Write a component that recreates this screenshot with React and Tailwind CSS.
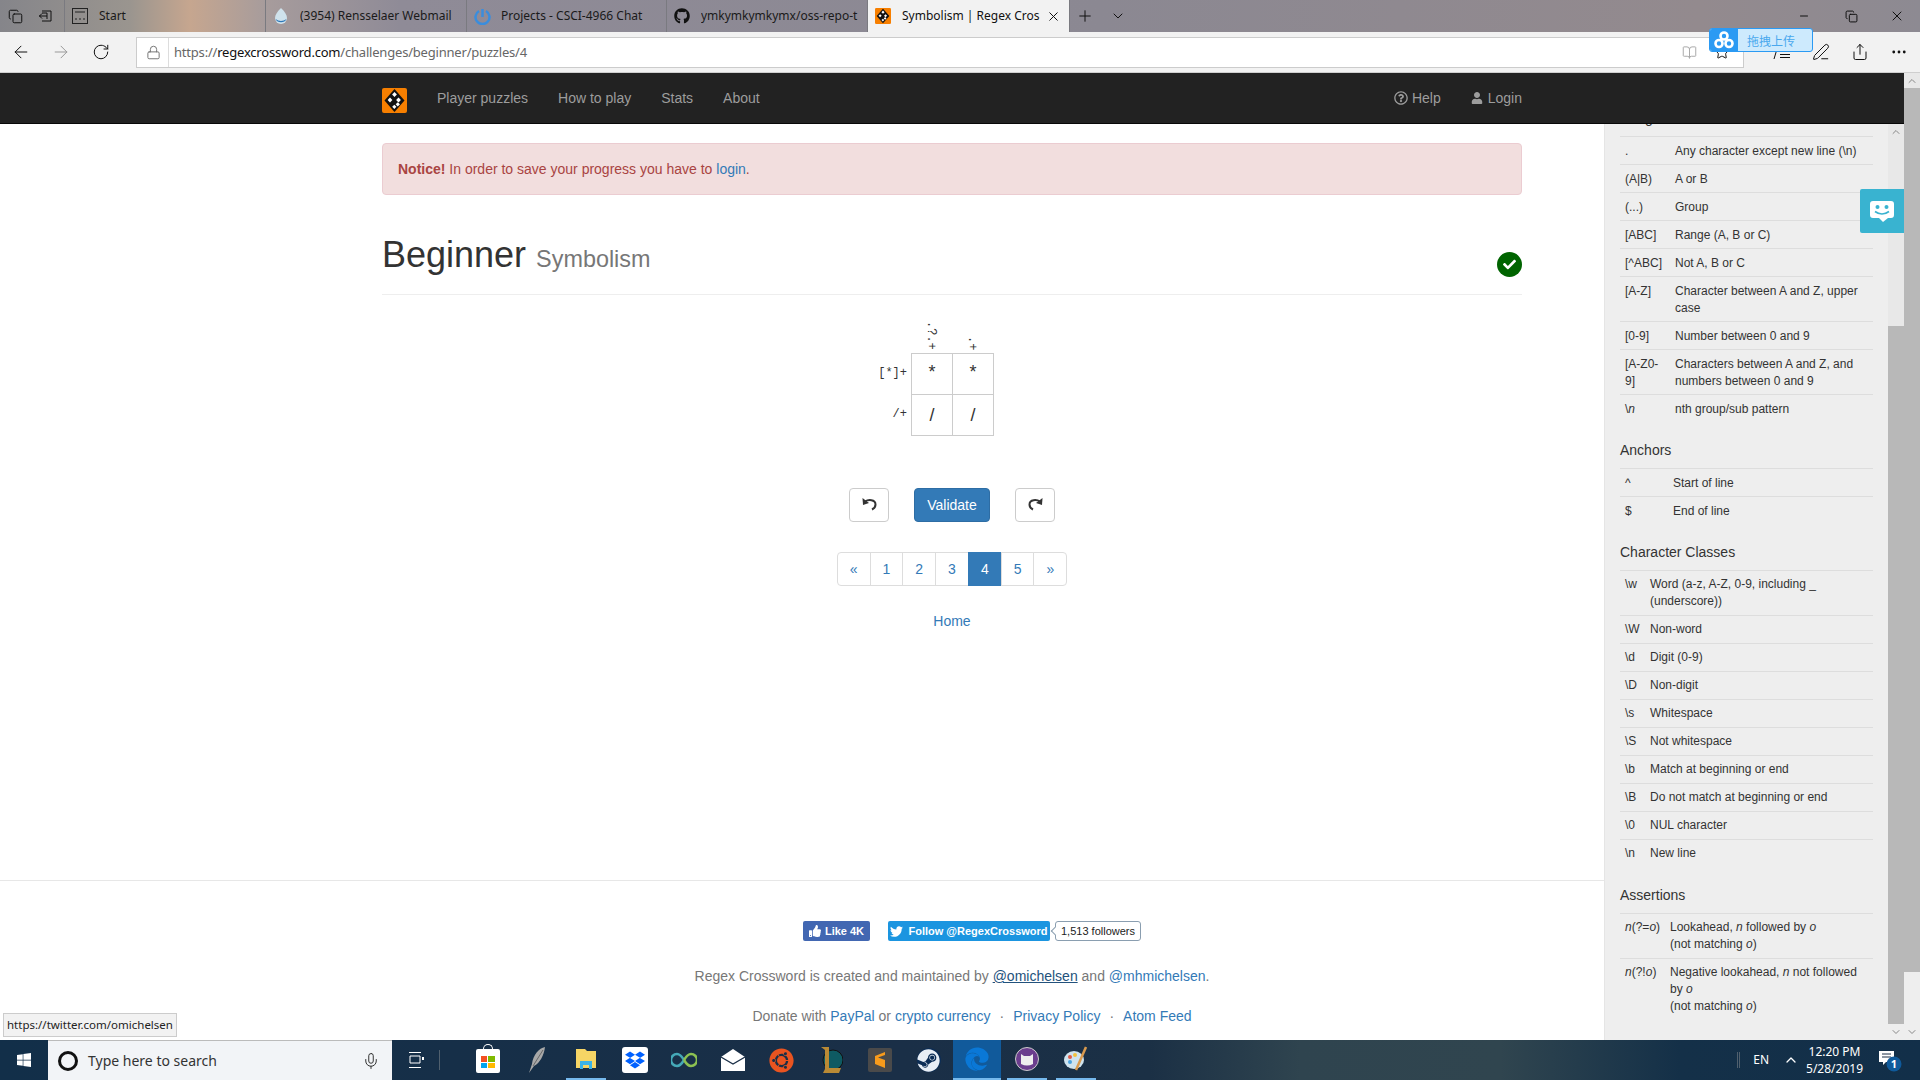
import { FaGithub, FaThumbsUp, FaTwitter, FaWindows, FaUbuntu, FaSteam, FaEdge, FaDropbox, FaCheck, FaUser, FaRegQuestionCircle } from 'react-icons/fa'
import { ArrowLeft, ArrowRight, RotateCw, Lock, BookOpen, Star, PenLine, Share, MoreHorizontal, Plus, ChevronDown, ChevronUp, X, Minus, Mic, Copy } from 'lucide-react'

const usage = [
  ['.', 'Any character except new line (\\n)'],
  ['(A|B)', 'A or B'],
  ['(...)', 'Group'],
  ['[ABC]', 'Range (A, B or C)'],
  ['[^ABC]', 'Not A, B or C'],
  ['[A-Z]', 'Character between A and Z, upper case'],
  ['[0-9]', 'Number between 0 and 9'],
  ['[A-Z0-9]', 'Characters between A and Z, and numbers between 0 and 9'],
  [<>\<i>n</i></>, 'nth group/sub pattern'],
]
const anchors = [['^', 'Start of line'], ['$', 'End of line']]
const classes = [
  ['\\w', 'Word (a-z, A-Z, 0-9, including _ (underscore))'],
  ['\\W', 'Non-word'],
  ['\\d', 'Digit (0-9)'],
  ['\\D', 'Non-digit'],
  ['\\s', 'Whitespace'],
  ['\\S', 'Not whitespace'],
  ['\\b', 'Match at beginning or end'],
  ['\\B', 'Do not match at beginning or end'],
  ['\\0', 'NUL character'],
  ['\\n', 'New line'],
]
const assertions = [
  [<><i>n</i>(?=<i>o</i>)</>, <>Lookahead, <i>n</i> followed by <i>o</i><br />(not matching <i>o</i>)</>],
  [<><i>n</i>(?!<i>o</i>)</>, <>Negative lookahead, <i>n</i> not followed by <i>o</i><br />(not matching <i>o</i>)</>],
]

function Logo({ size = 25 }) {
  return (
    <svg width={size} height={size} viewBox="0 0 25 25">
      <rect width="25" height="25" rx="2" fill="#f77f00" />
      <path d="M12.5 1 L22.5 12.5 L12.5 24 L2.5 12.5 Z" fill="#111" />
      <rect x="10.8" y="4.8" width="3.4" height="3.4" fill="#fff" transform="rotate(45 12.5 6.5)" />
      <rect x="6.3" y="10.3" width="3.4" height="3.4" fill="#fff" transform="rotate(45 8 12)" />
      <rect x="14.8" y="10.3" width="3.4" height="3.4" fill="#fff" transform="rotate(45 16.5 12)" />
      <rect x="14.3" y="14.8" width="3" height="3" fill="#fff" transform="rotate(45 15.8 16.3)" />
      <rect x="10.8" y="17.3" width="3" height="3" fill="#fff" transform="rotate(45 12.3 18.8)" />
    </svg>
  )
}

function Tab({ icon, title, active, width }) {
  return (
    <div className={`flex items-center h-full pl-[6px] overflow-hidden shrink-0 border-r border-[#7a7a80] ${active ? 'bg-[#f2f2f2] text-[#111]' : 'text-[#1a1a1a]'} ${width}`}>
      <span className="w-[18px] h-[18px] flex items-center justify-center shrink-0">{icon}</span>
      <span className="ml-[10px] whitespace-nowrap overflow-hidden flex-1">{title}</span>
      {active && <X size={15} absoluteStrokeWidth strokeWidth={1} className="ml-[4px] mr-[8px] shrink-0" />}
    </div>
  )
}

function TabBar() {
  return (
    <div className="h-[32px] flex items-center text-[12px] font-['Noto_Sans',sans-serif] bg-[linear-gradient(90deg,#85858a_0px,#9a958f_130px,#c6a68f_190px,#a79c9c_265px,#8f8b97_400px,#8b8892_1100px,#938a8e_1700px,#8d8a92_1920px)]">
      <div className="w-[65px] h-full flex items-center gap-[15px] pl-[8px] border-r border-[#7a7a80] shrink-0">
        <Copy size={15} absoluteStrokeWidth strokeWidth={1} className="text-[#111]" />
        <svg width="16" height="16" viewBox="0 0 16 16" fill="none" stroke="#111"><path d="M4 3h9v10H4M1 8h8M4 5.5 1.5 8 4 10.5M4 5h5v6" /></svg>
      </div>
      <Tab width="w-[201px]" title="Start" icon={<svg width="16" height="16" viewBox="0 0 16 16" fill="none" stroke="#222"><rect x="0.5" y="0.5" width="15" height="15" /><path d="M3 4h10M3 11h2M7 11h2M11 11h2" /></svg>} />
      <Tab width="w-[201px]" title="(3954) Rensselaer Webmail" icon={<svg width="16" height="18" viewBox="0 0 16 18"><path d="M8 1 C12 5 14 8 14 11 A6 6 0 0 1 2 11 C2 8 4 5 8 1Z" fill="#cfe2ec" /><path d="M2.5 12 A6 5.5 0 0 0 13.5 12 C10 14.5 6 14.5 2.5 12Z" fill="#2f78b8" /></svg>} />
      <Tab width="w-[200px]" title="Projects - CSCI-4966 Chat" icon={<svg width="17" height="17" viewBox="0 0 17 17" fill="none"><path d="M5 3 A7 7 0 1 0 12 3" stroke="#3a8ddd" strokeWidth="2.5" /><path d="M8.5 1v8" stroke="#3a8ddd" strokeWidth="2.5" /></svg>} />
      <Tab width="w-[201px]" title="ymkymkymkymx/oss-repo-t" icon={<FaGithub size={16} color="#111" />} />
      <Tab active width="w-[202px]" title="Symbolism | Regex Cros" icon={<Logo size={16} />} />
      <Plus size={18} absoluteStrokeWidth strokeWidth={1} className="ml-[6px] text-[#111]" />
      <ChevronDown size={16} absoluteStrokeWidth strokeWidth={1} className="ml-[16px] text-[#111]" />
      <div className="ml-auto flex items-center text-[#111]">
        <Minus size={12} absoluteStrokeWidth strokeWidth={1} />
        <Copy size={13} absoluteStrokeWidth strokeWidth={1} className="ml-[35px]" />
        <X size={16} absoluteStrokeWidth strokeWidth={1} className="ml-[31px] mr-[15px]" />
      </div>
    </div>
  )
}

function HubIcon() {
  return (
    <svg width="18" height="18" viewBox="0 0 18 18" fill="none" stroke="#111">
      <path d="M7 8.5h10M7 11.5h10M7 14.5h10M1 16 4 6" />
    </svg>
  )
}

function AddressBar() {
  return (
    <div className="relative h-[41px] bg-[#f2f2f2] border-b border-[#cfcfcf] flex items-center font-['Noto_Sans',sans-serif] text-[#111]">
      <ArrowLeft size={20} absoluteStrokeWidth strokeWidth={1} className="ml-[11px]" />
      <ArrowRight size={20} absoluteStrokeWidth strokeWidth={1} className="ml-[20px] text-[#999]" />
      <RotateCw size={18} absoluteStrokeWidth strokeWidth={1} className="ml-[21px]" />
      <div className="ml-[26px] w-[1608px] h-[31px] bg-white border border-[#ccc] flex items-center">
        <Lock size={15} absoluteStrokeWidth strokeWidth={1} className="ml-[9px] text-[#777]" />
        <span className="ml-[7px] h-[29px] border-l border-[#ddd]" />
        <span className="ml-[5px] pt-[2px] text-[13px] text-[#666] tracking-[-0.2px]">https://<span className="text-[#111]">regexcrossword.com</span>/challenges/beginner/puzzles/4</span>
        <BookOpen size={15} absoluteStrokeWidth strokeWidth={1} className="ml-auto mr-[17px] text-[#aaa]" />
        <Star size={16} absoluteStrokeWidth strokeWidth={1} className="mr-[13px] text-[#111]" />
      </div>
      <div className="ml-[29px] flex items-center gap-[21px]">
        <HubIcon />
        <PenLine size={18} absoluteStrokeWidth strokeWidth={1} />
        <Share size={18} absoluteStrokeWidth strokeWidth={1} />
        <MoreHorizontal size={18} absoluteStrokeWidth strokeWidth={1.3} />
      </div>
      <div className="absolute left-[1709px] top-[-4px] w-[104px] h-[24px] rounded-[3px] border border-[#2b9af3] bg-[#cdeafd] flex items-center overflow-hidden">
        <span className="w-[28px] h-full bg-[#2b9af3] flex items-center justify-center">
          <svg width="20" height="18" viewBox="0 0 20 18" fill="none" stroke="#fff" strokeWidth="2.6"><circle cx="10" cy="5" r="3.5" /><circle cx="5" cy="12.5" r="3.5" /><circle cx="15" cy="12.5" r="3.5" /></svg>
        </span>
        <span className="ml-[9px] pt-[1px] text-[12px] text-[#49a8ee] font-['Noto_Sans_CJK_SC',sans-serif]">拖拽上传</span>
      </div>
    </div>
  )
}

function Nav() {
  return (
    <div className="h-[51px] bg-[#222] border-b border-[#080808] flex items-center pl-[382px] pr-[382px] text-[14px] text-[#9d9d9d] shrink-0">
      <span className="mt-[4px] flex"><Logo /></span>
      <span className="ml-[30px]">Player puzzles</span>
      <span className="ml-[30px]">How to play</span>
      <span className="ml-[30px]">Stats</span>
      <span className="ml-[30px]">About</span>
      <span className="ml-auto flex items-center gap-[4px]"><FaRegQuestionCircle size={14} />Help</span>
      <span className="ml-[30px] flex items-center gap-[5px]"><FaUser size={12} />Login</span>
    </div>
  )
}

function Puzzle() {
  return (
    <div className="mt-[23px] ml-[495px] flex items-start">
      <div className="mt-[35px] w-[30px] text-right font-['Liberation_Mono',monospace] text-[12px] text-[#333]">
        <div className="h-[41px] leading-[41px]">[*]+</div>
        <div className="h-[41px] leading-[41px]">/+</div>
      </div>
      <div className="ml-[4px]">
        <div className="h-[35px] flex font-['Liberation_Mono',monospace] text-[12px] text-[#333]">
          <div className="w-[41px] flex justify-center items-end pb-[3px] pr-[2px]"><span className="[writing-mode:vertical-lr] leading-none">.?.+</span></div>
          <div className="w-[41px] flex justify-center items-end pb-[3px] pr-[2px]"><span className="[writing-mode:vertical-lr] leading-none">.+</span></div>
        </div>
        <div className="grid grid-cols-[41px_41px] grid-rows-[41px_41px] border-t border-l border-[#ccc] w-[83px] text-[18px] text-[#333]">
          <div className="border-r border-b border-[#ccc] flex items-center justify-center pb-[3px]">*</div>
          <div className="border-r border-b border-[#ccc] flex items-center justify-center pb-[3px]">*</div>
          <div className="border-r border-b border-[#ccc] flex items-center justify-center">/</div>
          <div className="border-r border-b border-[#ccc] flex items-center justify-center">/</div>
        </div>
      </div>
    </div>
  )
}

function TurnIcon({ flip }) {
  return (
    <svg width="15" height="14" viewBox="0 0 15 14" className={flip ? '-scale-x-100' : ''} fill="none">
      <path d="M3 4.5 C6 2.5 13.5 2 13.5 7.5 C13.5 10 12 11.5 10 12.5" stroke="#333" strokeWidth="2" />
      <path d="M0.5 1 L1 8 L7 6 Z" fill="#333" />
    </svg>
  )
}

function Controls() {
  return (
    <div className="mt-[52px] flex justify-center gap-[25px] items-center text-[14px]">
      <button className="w-[40px] h-[34px] bg-white border border-[#ccc] rounded-[4px] flex items-center justify-center pb-[3px]"><TurnIcon /></button>
      <button className="w-[76px] h-[34px] bg-[#337ab7] border border-[#2e6da4] text-white rounded-[4px]">Validate</button>
      <button className="w-[40px] h-[34px] bg-white border border-[#ccc] rounded-[4px] flex items-center justify-center pb-[3px]"><TurnIcon flip /></button>
    </div>
  )
}

function Pagination() {
  const items = ['«', '1', '2', '3', '4', '5', '»']
  return (
    <div className="mt-[30px] flex justify-center">
      <div className="flex text-[14px] text-[#337ab7] h-[34px]">
        {items.map(p => (
          <span
            key={p}
            className={`px-[12px] -ml-px first:ml-0 border flex items-center first:rounded-l-[4px] last:rounded-r-[4px] ${p === '4' ? 'bg-[#337ab7] border-[#337ab7] text-white' : 'bg-white border-[#ddd]'}`}
          >
            {p}
          </span>
        ))}
      </div>
    </div>
  )
}

function Footer() {
  return (
    <div className="mt-auto border-t border-[#e7e7e7] h-[160px] shrink-0 w-full">
      <div className="ml-[382px] w-[1140px] text-[14px] text-[#777]">
        <div className="mt-[40px] pl-[40px] h-[20px] flex justify-center items-center text-[11px] font-bold">
          <span className="w-[67px] h-[20px] bg-[#4267b2] text-white rounded-[2px] flex items-center justify-center gap-[4px]"><FaThumbsUp size={12} />Like 4K</span>
          <span className="ml-[18px] w-[162px] h-[20px] bg-[#1b95e0] text-white rounded-[2px] flex items-center justify-center gap-[5px]"><FaTwitter size={13} />Follow @RegexCrossword</span>
          <span className="relative ml-[5px] w-[86px] h-[20px] bg-white border border-[#8a9eb0] text-[#222] rounded-[3px] flex items-center justify-center font-normal text-[11px]">
            <span className="absolute left-[-4px] top-[6px] w-[6px] h-[6px] rotate-45 bg-white border-l border-b border-[#8a9eb0]" />
            1,513 followers
          </span>
        </div>
        <p className="mt-[25px] text-center h-[20px] leading-[20px]">
          Regex Crossword is created and maintained by <span className="text-[#23527c] underline">@omichelsen</span> and <span className="text-[#337ab7]">@mhmichelsen</span>.
        </p>
        <p className="mt-[20px] pl-[40px] text-center h-[20px] leading-[20px]">
          Donate with <span className="text-[#337ab7]">PayPal</span> or <span className="text-[#337ab7]">crypto currency</span>
          <span className="mx-[9px]">·</span><span className="text-[#337ab7]">Privacy Policy</span>
          <span className="mx-[9px]">·</span><span className="text-[#337ab7]">Atom Feed</span>
        </p>
      </div>
    </div>
  )
}

function RefTable({ rows, colClass, rowClass = 'pt-[5px] pb-[5px]' }) {
  return (
    <div>
      {rows.map((r, i) => (
        <div key={i} className={`flex border-t border-[#ddd] leading-[17px] ${rowClass}`}>
          <div className={`shrink-0 pl-[5px] ${colClass}`}>{r[0]}</div>
          <div className="pr-[5px] flex-1">{r[1]}</div>
        </div>
      ))}
    </div>
  )
}

function Heading({ children }) {
  return <h4 className="text-[14px] leading-[20px] mt-[18px] mb-[8px]">{children}</h4>
}

function Sidebar() {
  return (
    <aside className="w-[284px] shrink-0 bg-[#eee] border-l border-[#e5e5e5] text-[12px] text-[#333] px-[15px] overflow-hidden">
      <h4 className="text-[14px] leading-[20px] -mt-[16px] mb-[8px]">Usage</h4>
      <RefTable rows={usage} colClass="w-[55px] pr-[10px]" rowClass="pt-[6px] pb-[4px]" />
      <Heading>Anchors</Heading>
      <RefTable rows={anchors} colClass="w-[53px]" rowClass="pt-[6px] pb-[4px]" />
      <Heading>Character Classes</Heading>
      <RefTable rows={classes} colClass="w-[30px]" />
      <Heading>Assertions</Heading>
      <RefTable rows={assertions} colClass="w-[50px]" />
    </aside>
  )
}

function TaskSlot({ children, on }) {
  return (
    <div className="w-[49px] h-full flex justify-center shrink-0">
      <div className={`w-[40px] h-full flex items-center justify-center ${on ? 'border-b-2 border-[#76b9ed]' : ''}`}>{children}</div>
    </div>
  )
}

function Taskbar() {
  return (
    <div className="relative h-[40px] shrink-0 flex items-center text-white font-['Noto_Sans',sans-serif] bg-[linear-gradient(90deg,#122f49_0px,#1a2f47_900px,#1b3045_1150px,#2f444f_1300px,#30454f_1500px,#143048_1680px,#122f49_1920px)]">
      <div className="w-[48px] flex justify-center"><FaWindows size={16} /></div>
      <div className="w-[344px] h-full bg-[#f2f4f7] border-t border-[#bbb] flex items-center text-[#333] text-[14px]">
        <span className="ml-[10px] w-[20px] h-[20px] rounded-full border-[3px] border-[#111]" />
        <span className="ml-[10px]">Type here to search</span>
        <Mic size={18} absoluteStrokeWidth strokeWidth={1} className="ml-auto mr-[12px]" />
      </div>
      <svg width="16" height="16" viewBox="0 0 16 16" className="ml-[16px]" fill="none" stroke="#fff"><path d="M1 .5h12M1 15.5h12M2 4h10v7H2z" /><path d="M15 5v3" strokeWidth="2" /></svg>
      <span className="ml-[15px] h-[20px] border-l border-[#50606e] shrink-0" />
      <div className="ml-[23px] flex h-full">
        <TaskSlot>
          <div className="relative w-[24px] h-[24px] mt-[2px] bg-white rounded-[2px] grid grid-cols-2 gap-px p-[5px] pt-[7px]">
            <span className="absolute left-[7px] top-[-5px] w-[10px] h-[8px] rounded-t-[5px] border border-white border-b-0" />
            <span className="bg-[#f25022]" /><span className="bg-[#7fba00]" /><span className="bg-[#00a4ef]" /><span className="bg-[#ffb900]" />
          </div>
        </TaskSlot>
        <TaskSlot>
          <svg width="20" height="28" viewBox="0 0 20 28"><path d="M18 1 C12 2 6 9 5 18 L2 27 L7 20 C13 17 17 9 18 1Z" fill="#a8a8a8" /><path d="M16 4 6 20" stroke="#555" strokeWidth="0.8" /></svg>
        </TaskSlot>
        <TaskSlot on>
          <svg width="22" height="22" viewBox="0 0 22 22"><path d="M1 1h9l2 2h9v17H1z" fill="#f6d565" /><path d="M5 21v-8h12v8h-3v-4H8v4z" fill="#3ab3e8" /></svg>
        </TaskSlot>
        <TaskSlot>
          <div className="w-[26px] h-[26px] bg-white rounded-[3px] flex items-center justify-center"><FaDropbox size={20} color="#0061ff" /></div>
        </TaskSlot>
        <TaskSlot>
          <svg width="26" height="16" viewBox="0 0 26 16" fill="none" strokeWidth="2.5"><path d="M13 8 C10 3 8 2 6 2 A6 6 0 0 0 6 14 C8 14 10 13 13 8" stroke="#45a9b8" /><path d="M13 8 C16 3 18 2 20 2 A6 6 0 0 1 20 14 C18 14 16 13 13 8" stroke="#8cc152" /></svg>
        </TaskSlot>
        <TaskSlot>
          <svg width="24" height="24" viewBox="0 0 24 24"><path d="M0 9 12 1l12 8v14H0z" fill="#fff" /><path d="M0 9 12 16l12-7" fill="none" stroke="#1a2f47" strokeWidth="1.2" /></svg>
        </TaskSlot>
        <TaskSlot><FaUbuntu size={25} color="#e95420" /></TaskSlot>
        <TaskSlot>
          <svg width="24" height="28" viewBox="0 0 24 28"><circle cx="14" cy="14" r="10" fill="#0e5a62" stroke="#111" /><path d="M2 1h8v21h12l-2 5H4l2-4V4z" fill="#b98a35" /></svg>
        </TaskSlot>
        <TaskSlot>
          <div className="w-[24px] h-[24px] bg-[#4a4a4a] rounded-[2px] flex items-center justify-center">
            <svg width="12" height="18" viewBox="0 0 12 18" fill="#f89b1c"><path d="M11 1 1 5v4l10 4v-4L4 6.5 11 4zM1 13l10 4v-4L1 9z" /></svg>
          </div>
        </TaskSlot>
        <TaskSlot>
          <div className="w-[24px] h-[24px] rounded-full bg-[#0c2d55] flex items-center justify-center"><FaSteam size={23} color="#e8eef5" /></div>
        </TaskSlot>
        <div className="w-[48px] h-full bg-[#115a9b] flex items-center justify-center border-b-2 border-[#76b9ed] shrink-0 mr-[1px]"><FaEdge size={24} color="#0a78d7" /></div>
        <TaskSlot on>
          <svg width="24" height="24" viewBox="0 0 24 24"><circle cx="12" cy="12" r="11.5" fill="#6b3e8e" stroke="#ccc" /><path d="M6 7l3 2h6l3-2v10q-6 3-12 0z" fill="#eee" /></svg>
        </TaskSlot>
        <TaskSlot on>
          <svg width="24" height="26" viewBox="0 0 24 26"><ellipse cx="10" cy="14" rx="10" ry="9" fill="#cfe3ee" /><circle cx="6" cy="11" r="2" fill="#e05a47" /><circle cx="11" cy="9" r="2" fill="#f3c23d" /><circle cx="6" cy="16" r="2" fill="#4aa3df" /><path d="M22 1 12 24" stroke="#d99a4e" strokeWidth="2.5" /></svg>
        </TaskSlot>
      </div>
      <div className="ml-auto flex items-center text-[12px]">
        <span className="h-[16px] w-[3px] border-x border-[#50606e]" />
        <span className="ml-[13px]">EN</span>
        <ChevronUp size={16} absoluteStrokeWidth strokeWidth={1.3} className="ml-[14px]" />
        <div className="ml-[7px] text-center leading-[17px]">
          <div>12:20 PM</div>
          <div>5/28/2019</div>
        </div>
        <svg width="24" height="24" viewBox="0 0 24 24" className="ml-[15px] mr-[18px]">
          <path d="M1 3h15v11H8l-3 3v-3H1z" fill="#fff" /><path d="M4 6h9M4 9h9" stroke="#1a2f47" />
          <circle cx="16" cy="16" r="7.5" fill="#0f5a9b" /><text x="16" y="20" textAnchor="middle" fontSize="11" fontWeight="700" fill="#fff">1</text>
        </svg>
      </div>
      <div className="absolute left-[3px] top-[-27px] h-[24px] px-[3px] bg-[#f2f2f2] border border-[#ccc] text-[11.5px] leading-[22px] text-[#222]">https://twitter.com/omichelsen</div>
    </div>
  )
}

function ChatWidget() {
  return (
    <div className="absolute left-[1860px] top-[116px] w-[44px] h-[44px] bg-[#39b3d0] rounded-l-[2px] flex items-center justify-center">
      <svg width="26" height="23" viewBox="0 0 26 23">
        <path d="M4 1h18a3 3 0 0 1 3 3v11a3 3 0 0 1-3 3h-3l-5 4-4-4H4a3 3 0 0 1-3-3V4a3 3 0 0 1 3-3z" fill="#fff" />
        <circle cx="8.5" cy="7" r="2" fill="#39b3d0" /><circle cx="17.5" cy="7" r="2" fill="#39b3d0" />
        <path d="M6 11.5q7 5 14 0" fill="none" stroke="#39b3d0" strokeWidth="1.6" />
      </svg>
    </div>
  )
}

export default function App() {
  return (
    <div className="w-[1920px] h-screen flex flex-col overflow-hidden bg-white font-['Liberation_Sans',Arial,sans-serif] text-[#333]">
      <TabBar />
      <AddressBar />
      <div className="relative flex-1 min-h-0 flex">
        <div className="w-[1904px] flex flex-col min-h-0">
          <Nav />
          <div className="flex-1 min-h-0 flex">
            <main className="w-[1604px] shrink-0 flex flex-col">
              <div className="ml-[382px] w-[1140px]">
                <div className="mt-[19px] h-[52px] px-[15px] flex items-center bg-[#f2dede] border border-[#ebccd1] rounded-[4px] text-[14px] text-[#a94442]">
                  <span><b>Notice!</b> In order to save your progress you have to <span className="text-[#337ab7]">login</span>.</span>
                </div>
                <div className="mt-[40px] h-[60px] border-b border-[#eee] flex justify-between">
                  <h1 className="text-[36px] leading-[40px]">Beginner <span className="text-[23.4px] text-[#777]">Symbolism</span></h1>
                  <span className="mt-[17px] w-[25px] h-[25px] rounded-full bg-[#006400] flex items-center justify-center"><FaCheck size={13} color="#fff" /></span>
                </div>
                <Puzzle />
                <Controls />
                <Pagination />
                <div className="mt-[25px] text-center text-[14px] leading-[20px] text-[#337ab7]">Home</div>
              </div>
              <Footer />
            </main>
            <Sidebar />
            <div className="w-[16px] shrink-0 flex flex-col bg-[#b8b8b8]">
              <div className="h-[202px] bg-[#e8e8e8] flex justify-center pt-[2px]"><ChevronUp size={12} absoluteStrokeWidth strokeWidth={1} className="text-[#888]" /></div>
              <div className="flex-1" />
              <div className="h-[16px] bg-[#eee] flex justify-center items-center"><ChevronDown size={12} absoluteStrokeWidth strokeWidth={1} className="text-[#888]" /></div>
            </div>
          </div>
        </div>
        <div className="w-[16px] shrink-0 flex flex-col bg-[#b8b8b8]">
          <div className="h-[15px] bg-[#e8e8e8] flex justify-center items-center"><ChevronUp size={12} absoluteStrokeWidth strokeWidth={1} className="text-[#888]" /></div>
          <div className="flex-1" />
          <div className="h-[68px] bg-[#eee] flex justify-center items-end pb-[2px]"><ChevronDown size={12} absoluteStrokeWidth strokeWidth={1} className="text-[#888]" /></div>
        </div>
        <ChatWidget />
      </div>
      <Taskbar />
    </div>
  )
}
